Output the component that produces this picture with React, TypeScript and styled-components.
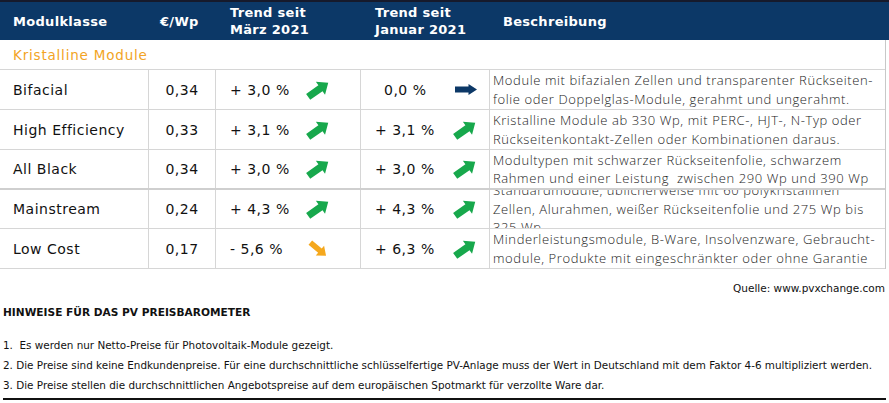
import React from 'react';
import styled, { createGlobalStyle } from 'styled-components';

const GlobalStyle = createGlobalStyle`
  html, body {
    margin: 0;
    padding: 0;
    background: #ffffff;
  }
  body {
    font-family: "DejaVu Sans", sans-serif;
    color: #111;
  }
`;

const COLS = '149px 67px 145px 129px 1fr';

const Page = styled.div`
  width: 889px;
  height: 403px;
  overflow: hidden;
  display: flex;
  flex-direction: column;
`;

const Table = styled.div`
  display: flex;
  flex-direction: column;
`;

const Head = styled.div`
  display: grid;
  grid-template-columns: ${COLS};
  height: 38px;
  border-top: 2px solid #161a2c;
  background: #0c3867;
  color: #fff;
  font-family: "DejaVu Sans", sans-serif;
  font-weight: bold;
  font-size: 13px;
  letter-spacing: 0.3px;
`;

const HeadCell = styled.div<{ $pad: number }>`
  display: flex;
  flex-direction: column;
  justify-content: center;
  padding-left: ${p => p.$pad}px;
  line-height: 17px;
`;

const Body = styled.div`
  display: flex;
  flex-direction: column;
  margin-right: 3px;
  border-right: 1px solid #c8c8c8;
`;

const Section = styled.div`
  height: 29px;
  display: flex;
  align-items: center;
  padding-left: 13px;
  border-bottom: 1px solid #d6d6d6;
  color: #f2a424;
  font-size: 13.5px;
  letter-spacing: 0.8px;
`;

const Row = styled.div<{ $h: number; $thick?: boolean }>`
  display: grid;
  grid-template-columns: ${COLS};
  height: ${p => p.$h}px;
  border-bottom: ${p => (p.$thick ? '2px solid #cfcfcf' : '1px solid #d6d6d6')};
  box-sizing: border-box;
`;

const Cell = styled.div<{ $center?: boolean; $pad?: number }>`
  display: flex;
  align-items: center;
  justify-content: ${p => (p.$center ? 'center' : 'flex-start')};
  padding-left: ${p => p.$pad ?? 0}px;
  border-right: 1px solid #d6d6d6;
  font-size: 14px;
  letter-spacing: 0.5px;
  color: #111;
  overflow: hidden;
`;

const TrendText = styled.span<{ $w: number; $indent?: number }>`
  width: ${p => p.$w}px;
  padding-left: ${p => p.$indent ?? 0}px;
  box-sizing: border-box;
  white-space: pre;
`;

const Desc = styled.div`
  display: flex;
  align-items: center;
  padding-left: 3px;
  overflow: hidden;
  font-family: "Open Sans", sans-serif;
  font-weight: 300;
  font-size: 13px;
  line-height: 18.5px;
  color: #1c1c1c;
  letter-spacing: 0.6px;
`;

const DescText = styled.div`
  white-space: pre;
`;

const Source = styled.div`
  text-align: right;
  padding: 13px 4px 0 0;
  font-size: 10.5px;
  color: #111;
  height: 18px;
`;

const Notes = styled.div`
  padding: 10px 3px 0 3px;
  font-size: 10.4px;
  color: #111;
  flex: 1;
  display: flex;
  flex-direction: column;
`;

const NotesTitle = styled.div`
  font-weight: bold;
  font-size: 10.6px;
  margin-bottom: 20px;
`;

const NoteLine = styled.div`
  white-space: pre;
  height: 20px;
  line-height: 14px;
`;

const BottomRule = styled.div`
  margin-top: auto;
  height: 2px;
  background: #111;
  margin-bottom: 3px;
`;

type Dir = 'up' | 'down' | 'right';

const Arrow = ({ dir }: { dir: Dir }) => {
  if (dir === 'right') {
    return (
      <svg width="22" height="11" viewBox="0 0 22 11">
        <polygon points="0,2.5 13.5,2.5 13.5,0 22,5.5 13.5,11 13.5,8.5 0,8.5" fill="#0c3867" />
      </svg>
    );
  }
  const up = dir === 'up';
  return (
    <svg width="24" height="20" viewBox="0 0 24 20">
      <g transform={`translate(12 10) rotate(${up ? -35 : 40})`}>
        {up ? (
          <polygon
            points="-12,-3.6 3,-3.6 3,-8 12.5,0 3,8 3,3.6 -12,3.6"
            fill="#17a84c"
          />
        ) : (
          <polygon
            points="-10,-2.8 2.5,-2.8 2.5,-6.5 10.5,0 2.5,6.5 2.5,2.8 -10,2.8"
            fill="#f5a81d"
          />
        )}
      </g>
    </svg>
  );
};

type Item = {
  name: string;
  price: string;
  t1: string;
  a1: Dir;
  t2: string;
  a2: Dir;
  indent2?: number;
  desc: string;
  h: number;
  thick?: boolean;
};

const rows: Item[] = [
  {
    name: 'Bifacial',
    price: '0,34',
    t1: '+ 3,0 %',
    a1: 'up',
    t2: '0,0 %',
    a2: 'right',
    indent2: 9,
    desc: 'Module mit bifazialen Zellen und transparenter Rückseiten-\nfolie oder Doppelglas-Module, gerahmt und ungerahmt.',
    h: 40,
  },
  {
    name: 'High Efficiency',
    price: '0,33',
    t1: '+ 3,1 %',
    a1: 'up',
    t2: '+ 3,1 %',
    a2: 'up',
    desc: 'Kristalline Module ab 330 Wp, mit PERC-, HJT-, N-Typ oder\nRückseitenkontakt-Zellen oder Kombinationen daraus.',
    h: 40,
  },
  {
    name: 'All Black',
    price: '0,34',
    t1: '+ 3,0 %',
    a1: 'up',
    t2: '+ 3,0 %',
    a2: 'up',
    desc: 'Modultypen mit schwarzer Rückseitenfolie, schwarzem\nRahmen und einer Leistung  zwischen 290 Wp und 390 Wp',
    h: 40,
    thick: true,
  },
  {
    name: 'Mainstream',
    price: '0,24',
    t1: '+ 4,3 %',
    a1: 'up',
    t2: '+ 4,3 %',
    a2: 'up',
    desc: 'Standardmodule, üblicherweise mit 60 polykristallinen\nZellen, Alurahmen, weißer Rückseitenfolie und 275 Wp bis\n325 Wp',
    h: 39,
  },
  {
    name: 'Low Cost',
    price: '0,17',
    t1: '- 5,6 %',
    a1: 'down',
    t2: '+ 6,3 %',
    a2: 'up',
    desc: 'Minderleistungsmodule, B-Ware, Insolvenzware, Gebraucht-\nmodule, Produkte mit eingeschränkter oder ohne Garantie',
    h: 40,
  },
];

export default function App() {
  return (
    <Page>
      <GlobalStyle />
      <Table>
        <Head>
          <HeadCell $pad={13}>Modulklasse</HeadCell>
          <HeadCell $pad={11}>€/Wp</HeadCell>
          <HeadCell $pad={14}>
            <span>Trend seit</span>
            <span>März 2021</span>
          </HeadCell>
          <HeadCell $pad={14}>
            <span>Trend seit</span>
            <span>Januar 2021</span>
          </HeadCell>
          <HeadCell $pad={13}>Beschreibung</HeadCell>
        </Head>
        <Body>
          <Section>Kristalline Module</Section>
          {rows.map(r => (
            <Row key={r.name} $h={r.h} $thick={r.thick}>
              <Cell $pad={13}>{r.name}</Cell>
              <Cell $center>{r.price}</Cell>
              <Cell $pad={14}>
                <TrendText $w={76}>{r.t1}</TrendText>
                <Arrow dir={r.a1} />
              </Cell>
              <Cell $pad={14}>
                <TrendText $w={r.a2 === 'right' ? 80 : 78} $indent={r.indent2}>
                  {r.t2}
                </TrendText>
                <Arrow dir={r.a2} />
              </Cell>
              <Desc>
                <DescText>{r.desc}</DescText>
              </Desc>
            </Row>
          ))}
        </Body>
      </Table>
      <Source>Quelle: www.pvxchange.com</Source>
      <Notes>
        <NotesTitle>HINWEISE FÜR DAS PV PREISBAROMETER</NotesTitle>
        <NoteLine>1.  Es werden nur Netto-Preise für Photovoltaik-Module gezeigt.</NoteLine>
        <NoteLine>
          2. Die Preise sind keine Endkundenpreise. Für eine durchschnittliche schlüsselfertige PV-Anlage muss der Wert in Deutschland mit dem Faktor 4-6 multipliziert werden.
        </NoteLine>
        <NoteLine>3. Die Preise stellen die durchschnittlichen Angebotspreise auf dem europäischen Spotmarkt für verzollte Ware dar.</NoteLine>
        <BottomRule />
      </Notes>
    </Page>
  );
}
